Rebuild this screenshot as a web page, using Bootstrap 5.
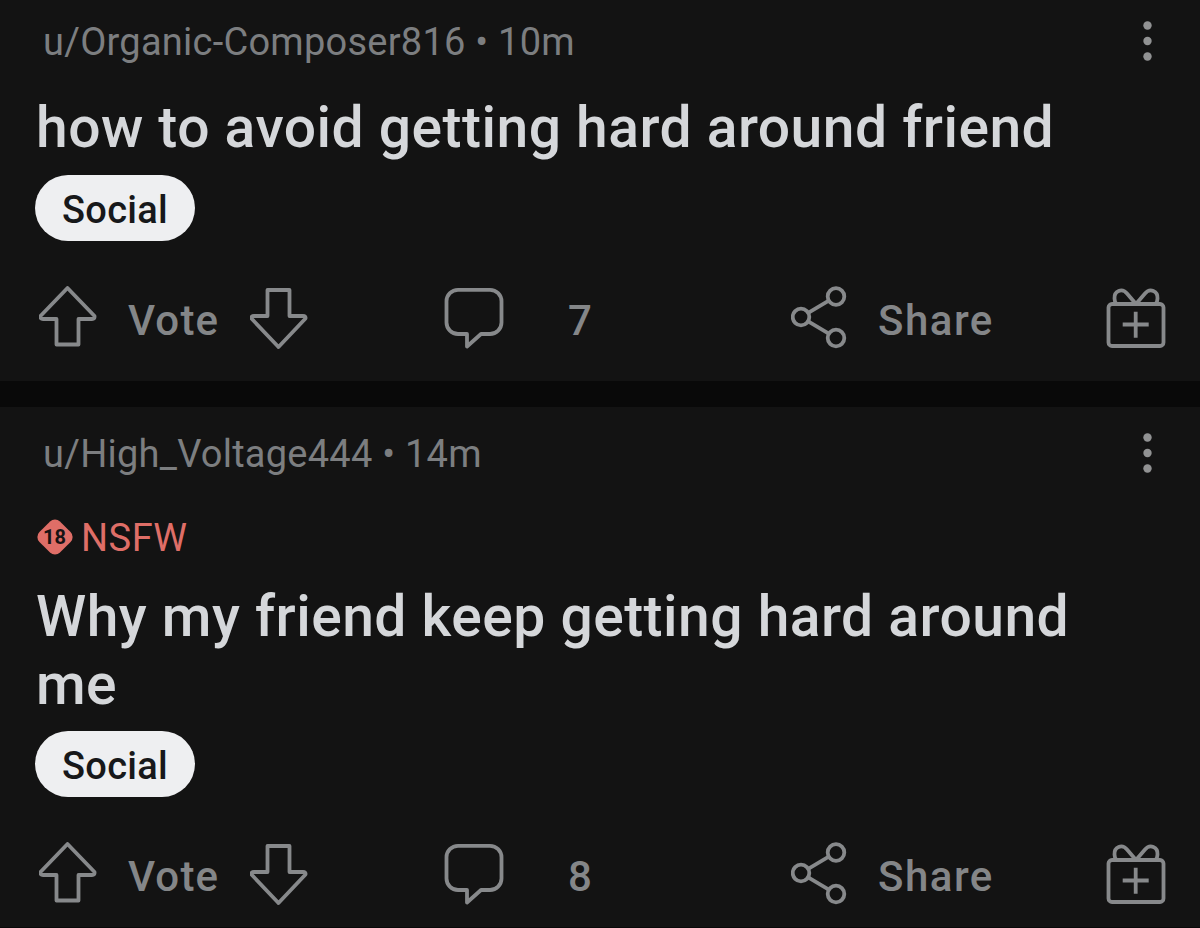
<!DOCTYPE html>
<html lang="en">

<head>
    <meta charset="UTF-8">
    <meta name="viewport" content="width=device-width, initial-scale=1.0">
    <title>Feed</title>
    <link href="https://cdn.jsdelivr.net/npm/bootstrap@5.3.0/dist/css/bootstrap.min.css" rel="stylesheet">
    <style>
        body {
            background-color: #090909;
            font-family: Roboto, "Liberation Sans", sans-serif;
            color: #848688;
            overflow: hidden;
        }

        .post {
            height: 381px;
            padding: 12px 34px 0 35px;
            background-color: #131313;
        }

        .post-tall {
            height: 520px;
            margin-top: 26px;
            padding-top: 17px;
        }

        .post-meta {
            height: 60px;
            padding-left: 8px;
            font-size: 38px;
            letter-spacing: 0.25px;
            color: #7c7e80;
        }

        .post-menu {
            width: 12px;
            height: 42px;
            margin: 0 12px 2px 0;
            fill: #919293;
        }

        .nsfw-tag {
            height: 50px;
            margin-top: 28px;
            font-size: 38px;
            letter-spacing: 0.5px;
            color: #df6e67;
        }

        .nsfw-tag svg {
            width: 40px;
            height: 40px;
            margin-right: 6px;
            letter-spacing: 0;
        }

        .nsfw-tag span {
            padding-top: 2px;
        }

        .post-title {
            margin: 22px 0 13px;
            padding: 0 80px 0 1px;
            font-size: 57px;
            font-weight: 500;
            line-height: 68px;
            letter-spacing: 0.47px;
            color: #d5d7da;
        }

        .nsfw-tag + .post-title {
            margin: 21px 0 12px;
        }

        .flair {
            width: 160px;
            height: 66px;
            padding-top: 4px;
            font-size: 38px;
            font-weight: 500;
            letter-spacing: 0.3px;
            color: #17181a;
            background-color: #eeeff1;
        }

        .actions {
            display: grid;
            grid-template-columns: 405px 347px 315px 60px;
            height: 64px;
            margin-top: 45px;
            padding-left: 4px;
            font-size: 42px;
            font-weight: 500;
            line-height: 1;
            letter-spacing: 1.2px;
        }

        .actions svg {
            flex: none;
            width: 60px;
            height: 64px;
            fill: none;
            stroke: #87898b;
            stroke-width: 3.8;
            stroke-linejoin: round;
        }

        .actions span {
            padding-top: 6px;
        }

        .label-vote {
            width: 122px;
            margin-left: 29px;
        }

        .label-count {
            margin-left: 64px;
        }

        .label-share {
            margin-left: 27px;
            letter-spacing: 1.5px;
        }
    </style>
</head>

<body>
    <!-- Shared icons -->
    <svg class="d-none">
        <symbol id="icon-menu" viewBox="0 0 12 42">
            <circle cx="5.500" cy="5.500" r="4.200" />
            <circle cx="5.500" cy="21" r="4.200" />
            <circle cx="5.500" cy="36.500" r="4.200" />
        </symbol>
        <symbol id="icon-up" viewBox="0 0 60 64">
            <path d="M28.500 2 55.500 30Q56 33 53 33H39.500V58.500H17.500V33H4Q1 33 1.500 30Z" />
        </symbol>
        <symbol id="icon-down" viewBox="0 0 60 64">
            <path d="M17.500 4H39.500V30H53Q56 30 55.500 32.500L28.500 61 1.500 32.500Q1 30 4 30H17.500Z" />
        </symbol>
        <symbol id="icon-comment" viewBox="0 0 60 64">
            <path d="M14 3.800H46A11.500 11.500 0 0 1 57.500 15.300V36.500A11.500 11.500 0 0 1 46 48H37L23 60.500V48H14A11.500 11.500 0 0 1 2.500 36.500V15.300A11.500 11.500 0 0 1 14 3.800Z" />
        </symbol>
        <symbol id="icon-share" viewBox="0 0 60 64">
            <circle cx="10" cy="31" r="8.300" />
            <circle cx="45" cy="10.500" r="8.300" />
            <circle cx="45" cy="52" r="8.300" />
            <path d="M17.200 26.800 37.800 14.700M17.200 35.300 37.800 47.700" />
        </symbol>
        <symbol id="icon-gift" viewBox="0 0 60 64">
            <rect x="2.500" y="18" width="55" height="42" rx="3.500" />
            <path d="M30 18 21 7.500C16 1.500 8 5 8.500 12.500Q8.500 16 10.500 18M30 18 39 7.500C44 1.500 52 5 51.500 12.500Q51.500 16 49.500 18M29.700 25.700V51.700M16.700 38.500H42.700" />
        </symbol>
    </svg>

    <article class="post">
        <div class="post-meta d-flex justify-content-between align-items-center">
            <span>u/Organic-Composer816 • 10m</span>
            <svg class="post-menu"><use href="#icon-menu" /></svg>
        </div>
        <h2 class="post-title">how to avoid getting hard around friend</h2>
        <div class="flair rounded-pill d-flex align-items-center justify-content-center">Social</div>
        <div class="actions">
            <div class="d-flex align-items-center">
                <svg><use href="#icon-up" /></svg>
                <span class="label-vote">Vote</span>
                <svg><use href="#icon-down" /></svg>
            </div>
            <div class="d-flex align-items-center">
                <svg><use href="#icon-comment" /></svg>
                <span class="label-count">7</span>
            </div>
            <div class="d-flex align-items-center">
                <svg><use href="#icon-share" /></svg>
                <span class="label-share">Share</span>
            </div>
            <svg><use href="#icon-gift" /></svg>
        </div>
    </article>

    <article class="post post-tall">
        <div class="post-meta d-flex justify-content-between align-items-center">
            <span>u/High_Voltage444 • 14m</span>
            <svg class="post-menu"><use href="#icon-menu" /></svg>
        </div>
        <div class="nsfw-tag d-flex align-items-center">
            <svg viewBox="0 0 40 40">
                <rect x="5.500" y="5.500" width="29" height="29" rx="7" fill="#df6e67" transform="rotate(45 20 20)" />
                <text x="19.500" y="27" text-anchor="middle" font-size="20" font-weight="700" fill="#171314">18</text>
            </svg>
            <span>NSFW</span>
        </div>
        <h2 class="post-title">Why my friend keep getting hard around me</h2>
        <div class="flair rounded-pill d-flex align-items-center justify-content-center">Social</div>
        <div class="actions">
            <div class="d-flex align-items-center">
                <svg><use href="#icon-up" /></svg>
                <span class="label-vote">Vote</span>
                <svg><use href="#icon-down" /></svg>
            </div>
            <div class="d-flex align-items-center">
                <svg><use href="#icon-comment" /></svg>
                <span class="label-count">8</span>
            </div>
            <div class="d-flex align-items-center">
                <svg><use href="#icon-share" /></svg>
                <span class="label-share">Share</span>
            </div>
            <svg><use href="#icon-gift" /></svg>
        </div>
    </article>

    <script src="https://cdn.jsdelivr.net/npm/bootstrap@5.3.0/dist/js/bootstrap.bundle.min.js"></script>
</body>

</html>
